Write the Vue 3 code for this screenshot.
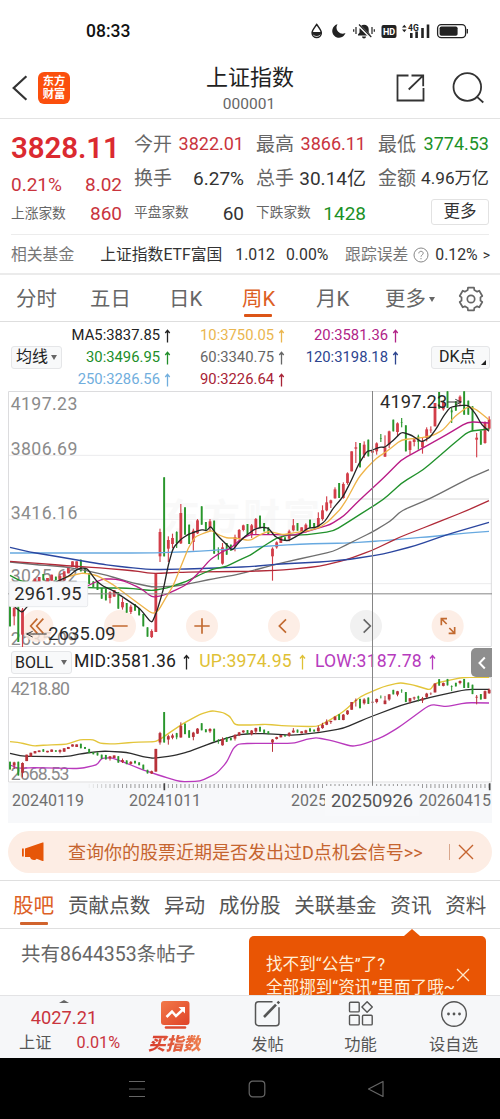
<template>
  <div class="page">
    <div class="status">
      <span class="clock">08:33</span>
      <svg class="status-icons" width="162" height="20" viewBox="308 21 162 20">
        <path d="M316.7 24.5c2.4 3.4 4.6 5.7 4.6 8.4a4.6 4.6 0 0 1-9.2 0c0-2.7 2.2-5 4.600-8.4z" fill="none" stroke="#222" stroke-width="1.5" />
        <path d="M311.8 32h9.8a5 5 0 0 1-9.8 0z" fill="#222" />
        <path d="M337.5 24.3a6.8 6.8 0 1 0 8 8.8 6.2 6.2 0 0 1-8-8.8z" fill="#222" />
        <path d="M358 35.5v-1l1.5-2v-3.2a4.6 4.6 0 0 1 9.2 0v3.2l1.5 2v1zM362 36.5h4a2 2 0 0 1-4 0z" fill="#222" />
        <path d="M358 24.5l12.5 12.5" stroke="#fff" stroke-width="2.6" />
        <path d="M359 24.5l12.3 12.5M356 27v7M353.7 29.3v2.4M372 27v7M374.3 29.3v2.4" stroke="#222" stroke-width="1.2" />
        <rect x="381.5" y="25" width="15" height="13" rx="2" fill="#222" />
        <text x="383" y="34.8" font-size="9" font-weight="700" fill="#fff">HD</text>
        <path d="M402 27.5l2.3-2.8 2.3 2.8zM402 29.5l2.3 2.8 2.3-2.8z" fill="#222" />
        <text x="408" y="30.5" font-size="8.5" font-weight="700" fill="#222">4G</text>
        <path d="M411.3 33v5M416.6 31.5v6.5M422.5 28v10M428 24.5v13.5" stroke="#222" stroke-width="2.6" />
        <rect x="437.6" y="24.6" width="28" height="13" rx="3.6" fill="none" stroke="#222" stroke-width="1.3" />
        <rect x="439.6" y="26.5" width="18" height="9.2" rx="1.8" fill="#222" />
        <path d="M467.3 29v4.5" stroke="#222" stroke-width="1.3" />
      </svg>
    </div>

    <header class="header">
      <div class="header-side">
        <svg width="18" height="28" viewBox="11 74 18 28"><path d="M26.4 76.3L13.7 88l12.7 11.7" fill="none" stroke="#333" stroke-width="2.2" /></svg>
        <div class="logo"><span>东方</span><span>财富</span></div>
      </div>
      <div class="header-title">
        <h1>上证指数</h1>
        <span>000001</span>
      </div>
      <div class="header-side right">
        <svg width="92" height="36" viewBox="394 70 92 36" fill="none" stroke="#333" stroke-width="1.8">
          <path d="M408.5 75.5h-11v25h26V88M411.5 75.5h11.7v10.7M423 75.7l-14.3 13.8" />
          <circle cx="467.3" cy="87" r="13.8" />
          <path d="M477 96.8l6.3 5.7" />
        </svg>
      </div>
    </header>

    <section class="quote">
      <div class="quote-col first">
        <strong class="last-price">3828.11</strong>
        <p class="up"><span>0.21%</span><span>8.02</span></p>
        <p><label class="small">上涨家数</label><span class="up">860</span></p>
      </div>
      <div class="quote-col">
        <p><label>今开</label><span class="up price">3822.01</span></p>
        <p><label>换手</label><span>6.27%</span></p>
        <p><label class="small">平盘家数</label><span>60</span></p>
      </div>
      <div class="quote-col">
        <p><label>最高</label><span class="up price">3866.11</span></p>
        <p><label>总手</label><span>30.14亿</span></p>
        <p><label class="small">下跌家数</label><span class="down">1428</span></p>
      </div>
      <div class="quote-col">
        <p><label>最低</label><span class="down price">3774.53</span></p>
        <p><label>金额</label><span class="amount">4.96万亿</span></p>
        <p class="end"><button class="more">更多</button></p>
      </div>
    </section>

    <section class="fund">
      <span class="muted">相关基金</span>
      <span class="fund-name">上证指数ETF富国</span>
      <span class="fund-price">1.012</span>
      <span class="fund-rate">0.00%</span>
      <span class="muted">跟踪误差</span>
      <svg class="help" width="16" height="16" viewBox="0 0 16 16" fill="none" stroke="#888" stroke-width="1">
        <circle cx="8" cy="8" r="7" />
        <path d="M5.8 6.400c.1-1.500 1.100-2.100 2.200-2.100 1.300 0 2.200.8 2.200 1.900 0 1.700-2.200 1.800-2.200 3.500M8 11v1.200" />
      </svg>
      <span class="fund-err">0.12%</span>
      <span class="fund-arrow">&gt;</span>
    </section>

    <nav class="periods">
      <span v-for="p in periods" :key="p" :class="{ active: p === '周K' }">{{ p }}</span>
      <span class="period-more">更多<i></i></span>
      <svg width="26" height="26" viewBox="-13 -13 26 26" fill="none" stroke="#666" stroke-width="1.7">
        <path :d="gear" stroke-linejoin="round" />
        <circle r="3.7" />
      </svg>
    </nav>

    <section class="legend">
      <button class="chip">均线<i></i></button>
      <div class="ma-grid">
        <span v-for="m in averages" :key="m.text" :class="m.cls">
          {{ m.text }}<svg width="7" height="14" viewBox="0 0 7 14"><path d="M3.5 13.5V1.5M1.300 4l2.200-2.700L5.700 4" /></svg>
        </span>
      </div>
      <button class="chip dk">DK点<b></b></button>
    </section>

    <!-- charts: three drawing units per pixel -->
    <section class="charts">
      <svg class="main-chart" width="484" height="256" viewBox="24 9 1452 768">
        <text class="watermark" x="490" y="425" textLength="470">东方财富</text>
        <g stroke="#ebebed" stroke-width="3">
          <path d="M24 202H1476M24 394H1476M24 587H1476" />
          <path d="M1050 333H1467" stroke="#d8d8d8" />
        </g>
        <path d="M25.5 10.5H1474V775.5H25.5z" fill="none" stroke="#dcdcde" stroke-width="3" />
        <g class="axis">
          <text x="32" y="65" textLength="200">4197.23</text>
          <text x="32" y="202" textLength="200">3806.69</text>
          <text x="32" y="394" textLength="200">3416.16</text>
          <text x="32" y="583" textLength="200">3025.62</text>
          <text x="32" y="770" textLength="200">2635.09</text>
        </g>
        <g class="tools" transform="translate(0 714)">
          <circle v-for="x in [112, 360, 606, 852, 1343]" :key="x" :cx="x" r="48" />
          <circle class="off" cx="1098" r="48" />
        </g>
        <g v-for="(c, i) in candles" :key="i" :class="c[0] === 'r' ? 'rise' : 'fall'">
          <rect :x="candleX(i) - 1.7" :y="c[1]" width="3.4" :height="c[2] - c[1]" />
          <rect :x="candleX(i) - bodyHalf(c)" :y="bodyTop(c)" :width="bodyHalf(c) * 2" :height="bodyBottom(c) - bodyTop(c)" />
        </g>
        <path v-for="l in mainLines" :key="l.color" class="line" :d="curve(l.points)" :stroke="l.color" />
        <path d="M24 617.5H1476" stroke="#858585" stroke-width="3" />
        <rect x="27" y="581" width="236" height="75" rx="5" fill="#f8f9fb" stroke="#e1e2e5" stroke-width="2" />
        <text class="cursor-value" x="43" y="636" textLength="202">2961.95</text>
        <g class="tools" transform="translate(0 714)">
          <path d="M112-22L92 0l20 22M130-22L110 0l20 22M337 0H383M583 0H629M606-23V23M858-20L838 0l20 20" />
          <path d="M1324-2V-22H1341M1325-21l15 15M1364 3V22H1346M1363 21l-15-15" />
          <path class="off-stroke" d="M1091-20L1111 0l-20 20" />
        </g>
        <g class="marks">
          <text x="1140" y="60" textLength="202">4197.23</text>
          <path d="M1342 42H1382M1366 34l18 8-18 9" />
          <text x="145" y="755" textLength="202">2635.09</text>
          <path d="M140 738H80M98 730l-18 8 18 9" />
        </g>
      </svg>

      <div class="boll">
        <button class="chip">BOLL<i></i></button>
        <span v-for="b in bolls" :key="b.text" :class="b.cls">
          {{ b.text }}<svg width="7" height="16" viewBox="0 0 7 16"><path d="M3.5 15.5V1.5M1 4.500l2.500-3 2.500 3" /></svg>
        </span>
        <div class="fold"><svg width="10" height="14" viewBox="0 0 10 14"><path d="M7.800 1.500L2.500 7l5.300 5.500" /></svg></div>
      </div>

      <svg class="sub-chart" width="484" height="106" viewBox="24 96 1452 318">
        <path d="M25.5 97.5H1474V411H25.5z" fill="none" stroke="#dcdcde" stroke-width="3" />
        <g class="axis">
          <text x="32" y="149" textLength="178">4218.80</text>
          <text x="32" y="405" textLength="176">2668.53</text>
        </g>
        <path v-for="l in subLines" :key="l.color" class="line" :d="curve(l.points)" :stroke="l.color" />
        <g v-for="(c, i) in candles" :key="i" :class="c[0] === 'r' ? 'sub-rise' : 'fall'">
          <rect :x="candleX(i) - 1.5" :y="subY(c[1])" width="3" :height="(c[2] - c[1]) * 0.385" />
          <rect :x="candleX(i) - bodyHalf(c)" :y="subY(bodyTop(c))" :width="bodyHalf(c) * 2" :height="(bodyBottom(c) - bodyTop(c)) * 0.385" />
        </g>
      </svg>

      <div class="dates">
        <svg width="484" height="8" viewBox="24 414 1452 24">
          <path v-for="n in 97" :key="n" :d="`M${255 + n * 12.5} 417v12`" stroke="#999" stroke-width="3" :opacity="Math.min(1, n / 9)" />
          <path d="M493 415v21M1469 415v21" stroke="#444" stroke-width="5" />
        </svg>
        <div class="date-row">
          <span>20240119</span>
          <span>20241011</span>
          <span class="cut">2025</span>
          <span class="current">20250926</span>
          <span>20260415</span>
        </div>
      </div>
      <i class="cross"></i>
    </section>

    <section class="banner">
      <svg width="24" height="20" viewBox="21 842 24 20"><path d="M22 848.5h1.800v8H22zM25 848.5l17.500-6h1V861h-1l-6-2.200c-.5 1-1.500 1.300-2.500 1.300-2 0-3.500-1-4-3H25z" fill="#e65608" /></svg>
      <span>查询你的股票近期是否发出过D点机会信号&gt;&gt;</span>
      <i></i>
      <svg width="16" height="16" viewBox="0 0 16 16"><path d="M1 1l14 14M15 1L1 15" stroke="#c5642f" stroke-width="1.4" /></svg>
    </section>

    <nav class="tabs">
      <span v-for="t in tabs" :key="t" :class="{ active: t === '股吧' }">{{ t }}</span>
    </nav>

    <section class="posts">
      <p>共有8644353条帖子</p>
      <div class="tip">
        <div><p>找不到“公告”了?</p><p>全部挪到“资讯”里面了哦~</p></div>
        <svg width="14" height="14" viewBox="0 0 14 14"><path d="M1 1l12 12M13 1L1 13" stroke="#ffe8c8" stroke-width="1.3" /></svg>
      </div>
    </section>

    <footer class="bottom">
      <div class="index">
        <i></i>
        <p class="index-price">4027.21</p>
        <p class="index-row"><span>上证</span><span class="up">0.01%</span></p>
      </div>
      <div class="action buy">
        <svg width="30" height="30" viewBox="159 1001 30 30">
          <defs><linearGradient id="buy" x1="0" y1="0" x2="1" y2="1"><stop offset="0" stop-color="#f27a4a" /><stop offset="1" stop-color="#df4227" /></linearGradient></defs>
          <rect x="160" y="1002" width="28.5" height="24" rx="3" fill="url(#buy)" />
          <path d="M165.5 1018l5.500-5.500 4 4.500 7.500-7" fill="none" stroke="#fff" stroke-width="2.5" />
          <path d="M177.5 1008h6.500v6.500z" fill="#fff" />
          <path d="M165 1028.500H184" stroke="#dd4b32" stroke-width="2.6" stroke-linecap="round" />
        </svg>
        <span>买指数</span>
      </div>
      <div class="action">
        <svg width="30" height="30" viewBox="253 999 30 30" fill="none" stroke="#555" stroke-width="1.5">
          <path d="M272.5 1001.700h-14a3 3 0 0 0-3 3v18a3 3 0 0 0 3 3h17.500a3 3 0 0 0 3-3v-15.500" />
          <path d="M264 1017l12-12.300M277.500 1003.300l1.700-1.700" stroke-width="2.6" />
        </svg>
        <span>发帖</span>
      </div>
      <div class="action">
        <svg width="30" height="30" viewBox="345.5 999 30 30" fill="none" stroke="#555" stroke-width="1.4">
          <rect x="349" y="1002.2" width="9.7" height="9.7" rx="1" /><rect x="349" y="1015.2" width="9.7" height="9.7" rx="1" />
          <rect x="362" y="1015.2" width="9.7" height="9.7" rx="1" /><path d="M366.6 1001.700l5.200 5.300-5.200 5.300-5.200-5.300z" stroke-linejoin="round" />
        </svg>
        <span>功能</span>
      </div>
      <div class="action">
        <svg width="30" height="30" viewBox="438.5 999 30 30" fill="none" stroke="#555" stroke-width="1.4">
          <circle cx="453.5" cy="1014" r="12.3" />
          <path d="M448 1014h.01M453.5 1014h.01M459 1014h.01" stroke-width="2.8" stroke-linecap="round" />
        </svg>
        <span>设自选</span>
      </div>
    </footer>

    <div class="system-nav">
      <svg width="18" height="18" viewBox="0 0 18 18"><path d="M1 1.500h16M1 9h16M1 16.500h16" /></svg>
      <svg width="18" height="18" viewBox="0 0 18 18"><rect x="1.2" y="1.2" width="15.6" height="15.6" rx="3.5" /></svg>
      <svg width="18" height="18" viewBox="0 0 18 18"><path d="M16 1.500v15L1.500 9z" stroke-linejoin="round" /></svg>
    </div>
  </div>
</template>

<script setup>
const periods = ['分时', '五日', '日K', '周K', '月K']
const tabs = ['股吧', '贡献点数', '异动', '成份股', '关联基金', '资讯', '资料']

const averages = [
  { text: 'MA5:3837.85', cls: 'c-black' },
  { text: '10:3750.05', cls: 'c-yellow' },
  { text: '20:3581.36', cls: 'c-magenta' },
  { text: '30:3496.95', cls: 'c-green' },
  { text: '60:3340.75', cls: 'c-gray' },
  { text: '120:3198.18', cls: 'c-blue' },
  { text: '250:3286.56', cls: 'c-sky' },
  { text: '90:3226.64', cls: 'c-red' }
]

const bolls = [
  { text: 'MID:3581.36', cls: 'c-black' },
  { text: 'UP:3974.95', cls: 'c-gold' },
  { text: 'LOW:3187.78', cls: 'c-purple' }
]

// [direction, high, low, body top, body bottom]
const candles = [
  ['g', 655, 715], ['r', 655, 712, 660, 685], ['g', 655, 762], ['r', 660, 778, 665, 740], ['r', 600, 650],
  ['r', 585, 615], ['r', 572, 590], ['r', 567, 580], ['g', 558, 577], ['r', 570, 582],
  ['r', 560, 578], ['g', 566, 577], ['r', 558, 590, 564, 578], ['r', 550, 577], ['r', 540, 556],
  ['r', 520, 537], ['r', 520, 540], ['g', 515, 550], ['g', 540, 555], ['g', 555, 588],
  ['g', 580, 597], ['g', 583, 606], ['g', 600, 632], ['g', 602, 637], ['r', 610, 646, 613, 630],
  ['r', 606, 626], ['g', 612, 662], ['r', 630, 665, 642, 658], ['g', 645, 674], ['r', 650, 678, 656, 672],
  ['g', 648, 668], ['g', 660, 682], ['g', 678, 715], ['g', 718, 746], ['r', 724, 750, 729, 747],
  ['r', 555, 732], ['r', 422, 522, 432, 505], ['g', 268, 505], ['r', 445, 522, 456, 482], ['r', 437, 480, 450, 468],
  ['g', 430, 480, 432, 465], ['r', 348, 468, 375, 466], ['g', 358, 440], ['g', 410, 468], ['r', 422, 488, 428, 462],
  ['r', 393, 438, 397, 436], ['g', 355, 410], ['g', 402, 425], ['r', 393, 430, 400, 418], ['g', 398, 497],
  ['g', 478, 515, 490, 492], ['r', 465, 530, 478, 527], ['g', 465, 500], ['g', 470, 488], ['r', 440, 490, 447, 475],
  ['r', 423, 455, 426, 450], ['r', 410, 430, 412, 426], ['g', 408, 440], ['r', 408, 450, 412, 440], ['r', 390, 440, 393, 420],
  ['g', 383, 420], ['g', 405, 430], ['g', 418, 440], ['r', 478, 578, 482, 505], ['r', 460, 482, 463, 478],
  ['r', 447, 465], ['g', 448, 458], ['r', 425, 460, 430, 452], ['r', 393, 430, 412, 427], ['g', 405, 428],
  ['r', 418, 434], ['r', 406, 434, 410, 430], ['g', 395, 420], ['g', 405, 420], ['r', 373, 420, 390, 418],
  ['r', 352, 398, 367, 393], ['r', 325, 370, 343, 367], ['r', 335, 360, 337, 346], ['r', 298, 332, 304, 331], ['g', 285, 330],
  ['r', 283, 332, 288, 330], ['r', 253, 290, 256, 285], ['r', 190, 250], ['r', 162, 225, 178, 182], ['g', 165, 238],
  ['r', 160, 210, 170, 200], ['g', 155, 205], ['r', 175, 212, 188, 194], ['r', 163, 200, 166, 190], ['g', 138, 162, 150, 152],
  ['r', 142, 207, 178, 206], ['r', 128, 180, 130, 170], ['g', 95, 130], ['r', 103, 145, 106, 132], ['g', 90, 118, 102, 104],
  ['g', 112, 190], ['r', 158, 200, 160, 186], ['r', 148, 175, 154, 162], ['g', 140, 185, 145, 162], ['r', 150, 197, 162, 178],
  ['r', 118, 160, 124, 150], ['r', 115, 135, 125, 127], ['r', 45, 115], ['g', 12, 62], ['r', 38, 68, 42, 64],
  ['g', 10, 60], ['g', 60, 105, 67, 73], ['g', 40, 68], ['r', 22, 52, 26, 42], ['g', 10, 80],
  ['g', 38, 80], ['g', 55, 128], ['r', 135, 208, 149, 155], ['g', 128, 170], ['r', 100, 167, 105, 165],
  ['r', 85, 125, 94, 122]
]

const candleX = (i) => 30 + i * 12.5
const bodyTop = (c) => c[3] ?? c[1]
const bodyBottom = (c) => c[4] ?? c[2]
const bodyHalf = (c) => (c[0] === 'r' ? 4.2 : 2.8)
const subY = (y) => 98 + y * 0.385

const mainLines = [
  { color: '#67a9e0', points: [30, 495, 450, 495, 600, 490, 750, 478, 900, 468, 1050, 465, 1150, 458, 1300, 445, 1400, 435, 1467, 430] },
  { color: '#6f6f6f', points: [30, 522, 120, 531, 190, 536, 260, 548, 320, 562, 400, 585, 457, 597, 520, 595, 580, 585, 640, 572, 700, 562, 750, 550, 830, 528, 920, 508, 1000, 490, 1050, 465, 1117, 432, 1170, 400, 1205, 368, 1290, 332, 1405, 272, 1467, 245] },
  { color: '#b02a38', points: [30, 520, 100, 525, 200, 533, 300, 540, 400, 548, 457, 557, 560, 552, 750, 550, 850, 546, 960, 535, 1040, 515, 1117, 487, 1200, 447, 1300, 408, 1400, 368, 1467, 338] },
  { color: '#2b469f', points: [30, 478, 90, 492, 180, 507, 300, 528, 380, 538, 457, 545, 560, 543, 650, 540, 750, 536, 840, 528, 960, 522, 1050, 514, 1150, 498, 1250, 472, 1340, 440, 1467, 403] },
  { color: '#21912c', points: [30, 562, 60, 578, 120, 592, 250, 598, 300, 600, 380, 600, 457, 608, 500, 600, 560, 580, 600, 560, 640, 543, 680, 535, 720, 515, 750, 502, 790, 475, 830, 450, 860, 442, 920, 440, 1000, 430, 1060, 392, 1150, 335, 1205, 285, 1270, 245, 1340, 185, 1405, 130, 1467, 123] },
  { color: '#b91c86', points: [250, 600, 280, 585, 310, 573, 340, 573, 370, 578, 420, 600, 457, 628, 490, 622, 515, 612, 560, 590, 600, 550, 630, 515, 665, 492, 690, 482, 720, 455, 750, 440, 790, 440, 840, 440, 880, 442, 940, 425, 990, 410, 1030, 385, 1080, 335, 1150, 270, 1205, 215, 1265, 182, 1340, 140, 1405, 101, 1467, 105] },
  { color: '#efb449', points: [190, 570, 225, 560, 250, 555, 290, 562, 340, 590, 400, 635, 457, 677, 475, 668, 500, 625, 520, 592, 545, 530, 565, 480, 585, 447, 605, 438, 635, 427, 655, 440, 680, 450, 705, 450, 750, 458, 780, 440, 805, 430, 850, 440, 880, 435, 925, 428, 960, 418, 985, 400, 1020, 365, 1040, 335, 1075, 270, 1100, 240, 1130, 210, 1160, 190, 1205, 155, 1260, 150, 1300, 142, 1330, 125, 1365, 85, 1405, 55, 1430, 65, 1467, 95] },
  { color: '#252525', points: [45, 658, 66, 674, 85, 652, 150, 590, 205, 565, 230, 545, 245, 540, 262, 542, 290, 580, 310, 595, 340, 608, 380, 635, 420, 662, 455, 706, 470, 672, 490, 605, 505, 530, 520, 478, 545, 452, 567, 438, 590, 430, 605, 425, 620, 428, 632, 415, 650, 440, 680, 470, 697, 487, 715, 465, 735, 445, 765, 423, 785, 418, 805, 420, 825, 445, 845, 456, 865, 458, 895, 442, 925, 420, 950, 418, 975, 400, 1000, 360, 1030, 325, 1055, 275, 1075, 230, 1100, 190, 1115, 187, 1140, 177, 1155, 178, 1180, 157, 1205, 132, 1235, 142, 1265, 162, 1290, 148, 1310, 120, 1330, 85, 1350, 58, 1380, 52, 1405, 52, 1425, 75, 1445, 110, 1467, 130] }
]

const subLines = [
  { color: '#e3c53a', points: [30, 290, 60, 293, 100, 303, 140, 300, 200, 298, 240, 284, 280, 284, 300, 295, 340, 297, 400, 292, 465, 290, 480, 283, 510, 262, 550, 235, 600, 208, 635, 197, 670, 203, 690, 215, 705, 240, 750, 240, 800, 238, 860, 243, 950, 245, 985, 228, 1030, 200, 1080, 155, 1150, 125, 1200, 113, 1240, 120, 1290, 135, 1305, 115, 1350, 105, 1390, 97, 1467, 97] },
  { color: '#2d2d2d', points: [30, 325, 70, 334, 200, 335, 250, 325, 310, 318, 380, 322, 430, 335, 460, 340, 520, 332, 560, 322, 640, 292, 710, 270, 750, 266, 800, 266, 880, 271, 960, 262, 1030, 250, 1100, 220, 1205, 180, 1290, 157, 1400, 133, 1467, 133] },
  { color: '#b939bd', points: [30, 360, 55, 370, 100, 368, 240, 371, 290, 360, 305, 340, 335, 338, 380, 355, 430, 375, 490, 395, 540, 410, 600, 409, 650, 385, 680, 352, 700, 310, 715, 297, 750, 295, 880, 295, 920, 283, 950, 278, 1000, 288, 1055, 304, 1090, 298, 1150, 275, 1200, 245, 1290, 178, 1340, 185, 1400, 173, 1467, 174] }
]

// straight segments with a small bend around each joint
function curve(p) {
  let d = `M${p[0]} ${p[1]}`
  for (let i = 2; i < p.length - 2; i += 2) {
    const t = 0.25
    d += `L${p[i] + (p[i - 2] - p[i]) * t} ${p[i + 1] + (p[i - 1] - p[i + 1]) * t}`
    d += `Q${p[i]} ${p[i + 1]} ${p[i] + (p[i + 2] - p[i]) * t} ${p[i + 1] + (p[i + 3] - p[i + 1]) * t}`
  }
  return d + `L${p[p.length - 2]} ${p[p.length - 1]}`
}

function gearPath() {
  const pts = []
  const steps = [[-15, 11.7], [15, 11.7], [20, 9.6], [40, 9.6]]
  for (let k = 0; k < 6; k++) {
    steps.forEach(([deg, r]) => {
      const a = ((k * 60 + deg - 90) * Math.PI) / 180
      pts.push(`${(r * Math.cos(a)).toFixed(2)} ${(r * Math.sin(a)).toFixed(2)}`)
    })
  }
  return `M${pts.join('L')}Z`
}
const gear = gearPath()
</script>

<style>
body {
  background: #fff;
}
</style>

<style scoped>
.page {
  width: 500px;
  height: 1119px;
  overflow: hidden;
  background: #fff;
  color: #333;
  font-family: Roboto, 'Noto Sans CJK SC', sans-serif;
  line-height: 1;
}

.page * {
  box-sizing: border-box;
}

p,
h1 {
  margin: 0;
  font-weight: 400;
}

button {
  padding: 0;
  font-family: inherit;
  color: inherit;
}

svg {
  display: block;
  flex: none;
}

span,
label {
  white-space: nowrap;
}

.status {
  height: 62px;
  padding: 21px 30px 0 86px;
  display: flex;
  justify-content: space-between;
}

.clock {
  font-size: 17.5px;
  line-height: 21px;
  font-weight: 500;
  color: #111;
}

.header {
  height: 57px;
  padding: 0 14px 0 11px;
  display: flex;
  justify-content: space-between;
  border-bottom: 1px solid #e3e3e3;
}

.header-side {
  width: 150px;
  height: 52px;
  display: flex;
  align-items: center;
  gap: 9px;
}

.header-side.right {
  justify-content: flex-end;
}

.logo {
  width: 32px;
  height: 32px;
  border-radius: 6px;
  background: #fb4f0d;
  color: #fff;
  font-size: 11.3px;
  font-weight: 700;
  line-height: 13px;
  display: flex;
  flex-direction: column;
  align-items: center;
  justify-content: center;
}

.header-title {
  text-align: center;
  padding: 1px 0 0 3px;
}

.header-title h1 {
  font-size: 22px;
  line-height: 30px;
  color: #222;
}

.header-title span {
  display: block;
  margin-left: -2px;
  font-size: 15.5px;
  line-height: 23px;
  color: #666;
}

.quote {
  height: 116px;
  margin: 0 11px;
  padding-top: 8px;
  display: grid;
  grid-template-columns: 111px 110px 110px 111px;
  column-gap: 12px;
  border-bottom: 1px solid #ececec;
}

.quote-col p {
  height: 34.5px;
  display: flex;
  align-items: center;
  justify-content: space-between;
  font-size: 19px;
}

.quote-col.first p {
  height: 29px;
}

.last-price {
  display: block;
  height: 43px;
  line-height: 43px;
  font-size: 29.5px;
  font-weight: 600;
  letter-spacing: -0.1px;
  color: #db2a30;
}

.quote label {
  color: #666;
}

.quote .small {
  font-size: 13.7px;
}

.quote .price {
  font-size: 18px;
}

.quote .amount {
  font-size: 17.2px;
}

.up {
  color: #c9343d;
}

.down {
  color: #1b9126;
}

.quote .end {
  justify-content: flex-end;
}

.more {
  width: 58px;
  height: 26px;
  margin-top: -2px;
  border: 1px solid #e2e2e2;
  border-radius: 3px;
  background: #fff;
  font-size: 16.5px;
  line-height: 22px;
}

.fund {
  height: 40px;
  padding: 1px 10px 0 11px;
  display: flex;
  align-items: center;
  font-size: 15.8px;
  border-bottom: 2px solid #ebebeb;
}

.muted {
  color: #777;
}

.fund-name {
  margin-left: 26px;
}

.fund-price {
  margin-left: 13px;
}

.fund-rate {
  margin: 0 auto 0 11px;
}

.help {
  margin: 0 6px 0 5px;
}

.fund-arrow {
  margin-left: 5px;
  font-size: 14px;
}

.periods {
  height: 47px;
  padding: 2px 0 0 16px;
  display: grid;
  grid-template-columns: 74px 79px 73px 74px 69px 73px 26px;
  align-items: center;
  font-size: 20.4px;
  color: #666;
  border-bottom: 1px solid #dedede;
}

.periods svg {
  margin-top: -1px;
}

.periods span {
  position: relative;
}

.periods .active,
.tabs .active {
  color: #dd6025;
}

.periods .active::after {
  content: '';
  position: absolute;
  left: 2px;
  bottom: -8px;
  width: 28px;
  height: 3px;
  border-radius: 1px;
  background: #dc5517;
}

.period-more {
  display: flex;
  align-items: center;
}

.periods i,
.chip i {
  margin-left: 3px;
  border: 3px solid transparent;
  border-top: 5px solid #666;
  border-bottom: 0;
}

.legend {
  height: 69px;
  padding: 2px 11px 0;
  display: flex;
  justify-content: space-between;
  align-items: center;
}

.chip {
  position: relative;
  height: 23px;
  padding: 0 4px;
  display: flex;
  align-items: center;
  background: #f8f9fa;
  border: 1px solid #e5e6e8;
  border-radius: 3px;
  font-size: 16px;
  color: #222;
}

.chip b {
  position: absolute;
  right: 3px;
  bottom: 3px;
  border-left: 5px solid transparent;
  border-bottom: 5px solid #222;
}

.dk {
  width: 59px;
  padding-left: 7px;
}

.legend .chip {
  flex: none;
  margin-top: -1px;
  line-height: 20px;
}

.ma-grid {
  width: 338px;
  margin-right: 31px;
  display: grid;
  grid-template-columns: 110px 114px 114px;
  grid-auto-rows: 22px;
}

.ma-grid span {
  display: flex;
  align-items: center;
  justify-content: flex-end;
  gap: 4px;
  margin-right: 1px;
  font-size: 14.8px;
}

.ma-grid path,
.boll span path {
  fill: none;
  stroke: currentColor;
  stroke-width: 1.3;
}

.c-black { color: #222; }
.c-yellow { color: #eab64f; }
.c-magenta { color: #b12387; }
.c-green { color: #218e2a; }
.c-gray { color: #666; }
.c-blue { color: #2d458f; }
.c-sky { color: #71aedd; }
.c-red { color: #a82336; }
.c-gold { color: #dfc135; }
.c-purple { color: #b63bbd; }

.charts {
  position: relative;
  width: 484px;
  margin: 0 8px;
}

.watermark {
  font-size: 110px;
  font-weight: 700;
  fill: #f9f9f9;
}

.axis text {
  font-size: 53px;
  fill: #8b8b8b;
}

.rise {
  fill: #d23e49;
}

.sub-rise {
  fill: #b8323a;
}

.fall {
  fill: #29962c;
}

.line {
  fill: none;
  stroke-width: 4;
}

.marks text,
.cursor-value {
  font-size: 55px;
  fill: #2a2a2a;
}

.marks path {
  fill: none;
  stroke: #333;
  stroke-width: 3;
}

.tools circle {
  fill: #fdeae0;
  opacity: 0.8;
}

.tools .off {
  fill: #eee;
}

.tools path {
  fill: none;
  stroke: #c26a30;
  stroke-width: 5;
}

.tools .off-stroke {
  stroke: #666;
}

.boll {
  position: relative;
  height: 30px;
  padding-left: 3px;
  display: flex;
  align-items: center;
  font-size: 17.6px;
  letter-spacing: 0.2px;
}

.boll .chip {
  width: 61px;
  padding: 0 4px 0 3px;
  justify-content: space-between;
  margin-right: 2px;
}

.boll span {
  display: flex;
  align-items: center;
  gap: 7px;
  margin-right: 9px;
}

.fold {
  position: absolute;
  right: 0;
  top: 1px;
  width: 21px;
  height: 29px;
  display: flex;
  align-items: center;
  justify-content: center;
  background: #8e8e8e;
  border-radius: 5px 0 0 5px;
}

.fold path {
  fill: none;
  stroke: #fff;
  stroke-width: 2;
}

.dates {
  height: 40px;
  background: #f7f8fa;
}

.date-row {
  height: 19px;
  padding: 0 1px 0 4px;
  display: flex;
  align-items: center;
  font-size: 16px;
  color: #6f6f6f;
}

.date-row span:nth-child(2) {
  margin-left: 45px;
}

.date-row .cut {
  width: 34px;
  margin-left: auto;
  overflow: hidden;
}

.date-row .current {
  height: 30px;
  width: 94px;
  line-height: 30px;
  text-align: center;
  font-size: 18.3px;
  color: #555;
  background: #f8f9fb;
}

.cross {
  position: absolute;
  left: 364px;
  top: 0;
  width: 1px;
  height: 394px;
  background: #858585;
}

.banner {
  height: 42px;
  margin: 8px 8px 0;
  padding: 0 18px 0 13px;
  display: flex;
  align-items: center;
  border-radius: 21px;
  background: #fdede4;
  color: #c5642f;
  font-size: 18px;
}

.banner span {
  margin-left: 23px;
  padding-top: 2px;
}

.banner i {
  width: 1px;
  height: 16px;
  margin: 0 8px 0 auto;
  background: #d9a78c;
}

.tabs {
  height: 49px;
  margin-top: 7px;
  padding-left: 13px;
  display: flex;
  gap: 13.7px;
  align-items: center;
  border: solid #dfdfdf;
  border-width: 1px 0;
  font-size: 20.6px;
  color: #555;
}

.tabs span {
  position: relative;
  line-height: 48px;
  padding-top: 3px;
}

.tabs .active::after {
  content: '';
  position: absolute;
  left: 7px;
  bottom: 5px;
  width: 28px;
  height: 3px;
  border-radius: 1px;
  background: #d1632d;
}

.posts {
  position: relative;
  height: 66px;
  padding: 14px 21px;
  font-size: 19.5px;
  line-height: 24px;
  color: #666;
}

.tip {
  position: absolute;
  left: 249px;
  top: 7px;
  width: 237px;
  height: 59px;
  padding: 18px 16px 0 17px;
  display: flex;
  justify-content: space-between;
  border-radius: 5px 5px 0 0;
  background: #e95504;
  color: #ffefd9;
  font-size: 16.6px;
  line-height: 22.5px;
}

.tip p {
  white-space: nowrap;
}

.tip > div {
  width: 188px;
}

.tip svg {
  margin-top: 14px;
}

.tip::before {
  content: '';
  position: absolute;
  left: 155px;
  top: -7px;
  border: 8px solid transparent;
  border-bottom: 7px solid #e95504;
  border-top: 0;
}

.bottom {
  position: relative;
  height: 63px;
  display: grid;
  grid-template-columns: 128px 93px 93px 93px 93px;
  background: #f6f7f9;
  border-top: 1px solid #e3e3e5;
  color: #555;
}

.index {
  display: flex;
  flex-direction: column;
  align-items: center;
}

.index i {
  margin-top: 4px;
  border: 5px solid transparent;
  border-bottom: 3px solid #666;
  border-top: 0;
}

.index-price {
  font-size: 18.3px;
  line-height: 24px;
  margin-top: 3px;
  color: #c9343d;
}

.index-row {
  width: 101px;
  margin-left: 11px;
  display: flex;
  justify-content: space-between;
  font-size: 16.2px;
  line-height: 25px;
}

.action {
  padding-top: 3px;
  display: flex;
  flex-direction: column;
  align-items: center;
  font-size: 16.3px;
}

.action span {
  line-height: 24px;
  margin-top: 4px;
}

.buy {
  padding-top: 5px;
}

.buy svg {
  margin-top: -1px;
}

.buy span {
  margin-top: 2px;
  font-size: 17.6px;
  font-weight: 900;
  font-style: italic;
  background: linear-gradient(90deg, #d63a2c, #ee8050);
  background-clip: text;
  color: transparent;
}

.system-nav {
  height: 61px;
  padding: 0 115px 0 128px;
  display: flex;
  align-items: center;
  justify-content: space-between;
  background: #000;
}

.system-nav svg {
  fill: none;
  stroke: #666;
  stroke-width: 1.2;
}
</style>
